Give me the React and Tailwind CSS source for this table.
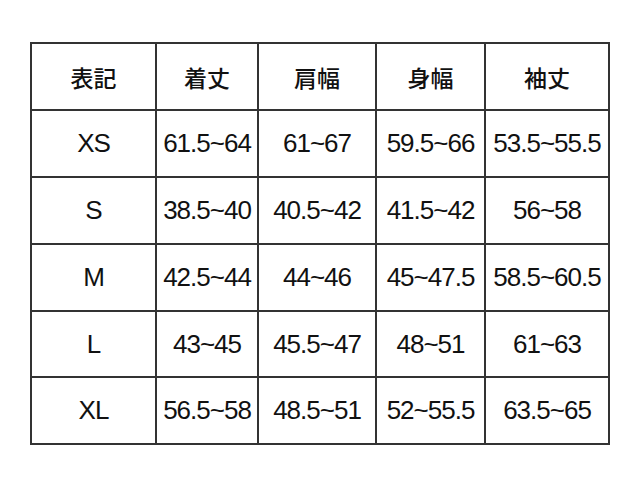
// Size chart: header row of garment measurements, one row per size.
const headers = ['表記', '着丈', '肩幅', '身幅', '袖丈']

const rows = [
  ['XS', '61.5~64', '61~67', '59.5~66', '53.5~55.5'],
  ['S', '38.5~40', '40.5~42', '41.5~42', '56~58'],
  ['M', '42.5~44', '44~46', '45~47.5', '58.5~60.5'],
  ['L', '43~45', '45.5~47', '48~51', '61~63'],
  ['XL', '56.5~58', '48.5~51', '52~55.5', '63.5~65'],
]

export default function App() {
  return (
    <div className="h-[499px] w-[640px] bg-white pl-[30px] pt-[42px]">
      <div className="inline-grid grid-cols-[123px_100px_116px_107px_122px] grid-rows-[65px_65px_65px_65px_64px_65px] gap-[2px] bg-[#333] p-[2px]">
        {headers.map((h) => (
          <div
            key={h}
            className="flex items-center justify-center bg-white pt-[2px] text-[23px] font-medium text-[#111]"
            style={{ fontFamily: '"Noto Sans CJK JP", "Noto Sans", sans-serif' }}
          >
            {h}
          </div>
        ))}
        {rows.map((row) =>
          row.map((cell, i) => (
            <div
              key={row[0] + i}
              className="flex items-center justify-center overflow-visible whitespace-nowrap bg-white text-[26px] tracking-[-1px] text-[#111]"
              style={{ fontFamily: '"Liberation Sans", Arial, sans-serif' }}
            >
              {cell}
            </div>
          ))
        )}
      </div>
    </div>
  )
}
